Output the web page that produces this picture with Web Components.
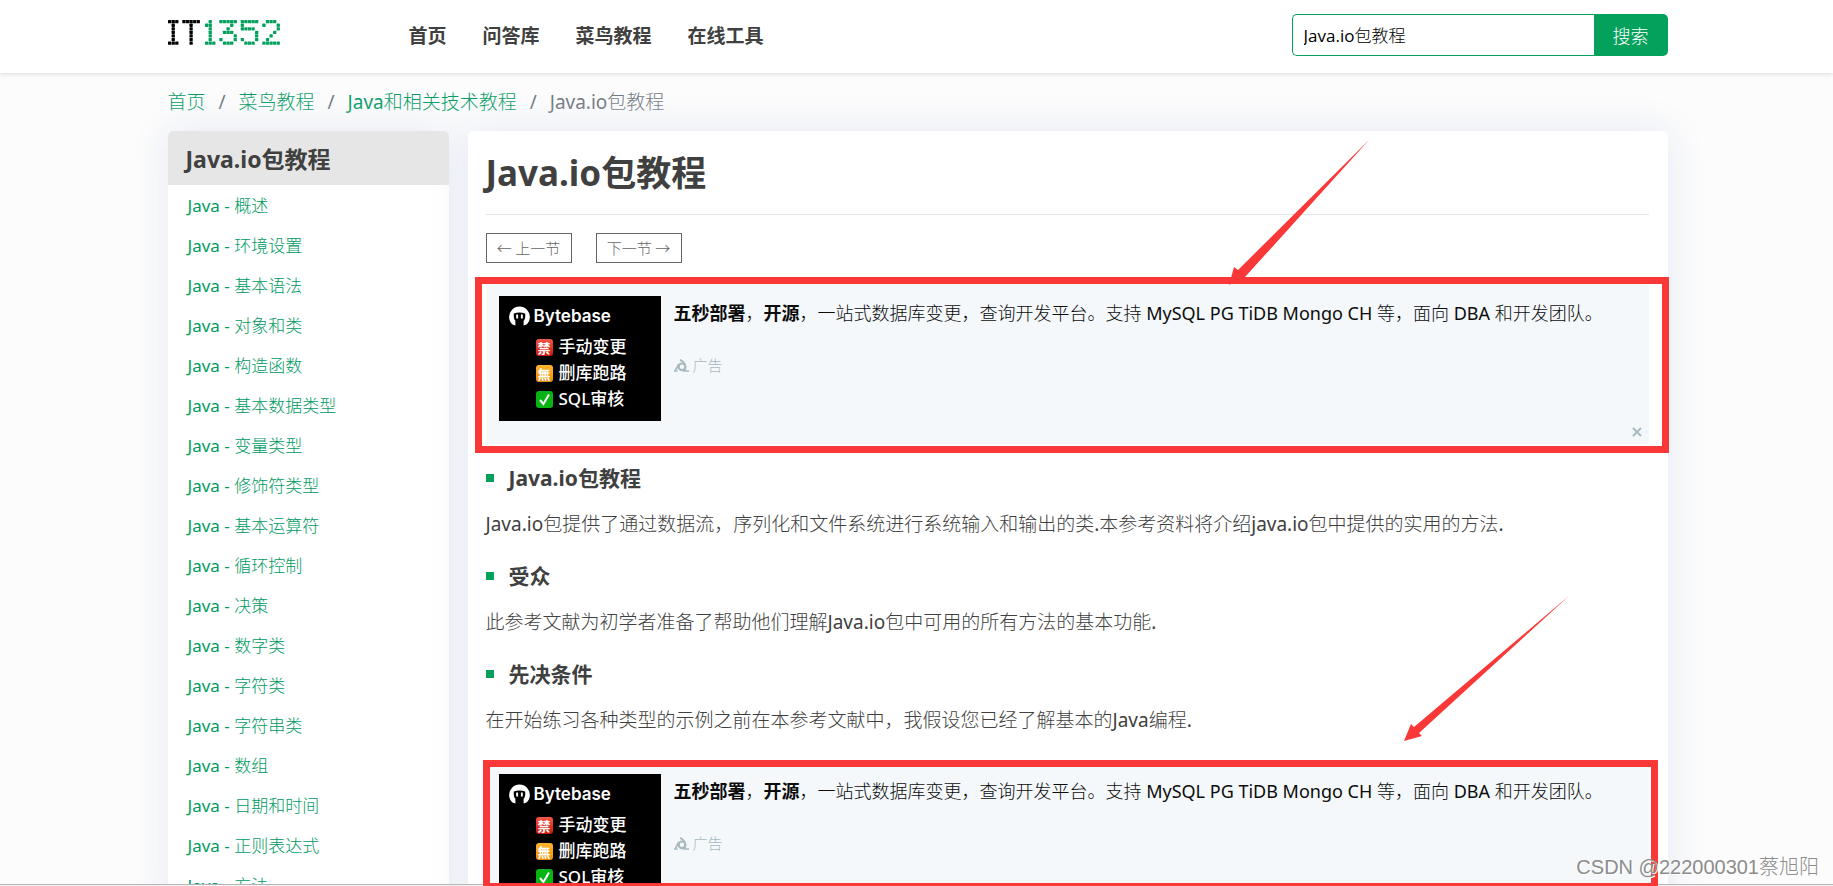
<!DOCTYPE html>
<html lang="zh-CN">
<head>
<meta charset="utf-8">
<title>Java.io包教程</title>
<style>
  html, body { margin: 0; padding: 0; }
  body {
    background: #fcfcfc;
    color: #404040;
    font-family: "Noto Sans", "Noto Sans CJK SC Light", "Noto Sans CJK SC", sans-serif;
    font-size: 19px;
    --green: #04a15d;
    --link: #009a61;
    --mark: #fa3838;
    --wrap: 1500px;
    --bold: "Noto Sans", "Noto Sans CJK SC", sans-serif;
  }
</style>
</head>
<body>
<tutorial-page></tutorial-page>
<script>
const define = (name, html, setup) => {
  const template = document.createElement('template');
  template.innerHTML = html;
  customElements.define(name, class extends HTMLElement {
    connectedCallback() {
      if (this.shadowRoot) return;
      const root = this.attachShadow({ mode: 'open' });
      root.append(template.content.cloneNode(true));
      if (setup) setup(root, this);
    }
  });
};

/* Dot-matrix logo, one 5x7 cell map for each character */
define('dot-logo', `
<style>
  :host { display: block; }
  svg { display: block; }
</style>
<svg width="114" height="28" viewBox="0 0 114 28" role="img" aria-label="IT1352"></svg>`, root => {
  const cells = [
    [0, '#000', ['###', '.#.', '.#.', '.#.', '.#.', '.#.', '###']],
    [14.3, '#000', ['#####', '..#..', '..#..', '..#..', '..#..', '..#..', '..#..']],
    [37, '#04a15d', ['.#.', '##.', '.#.', '.#.', '.#.', '.#.', '###']],
    [51.3, '#04a15d', ['#####', '...#.', '..#..', '.###.', '....#', '#...#', '.###.']],
    [72.7, '#04a15d', ['#####', '#....', '####.', '....#', '....#', '#...#', '.###.']],
    [94.3, '#04a15d', ['.###.', '#...#', '....#', '...#.', '..#..', '.#...', '#####']]
  ];
  const step = 3.58;
  let out = '';
  for (const [left, fill, rows] of cells)
    rows.forEach((row, y) => [...row].forEach((c, x) => {
      if (c === '#') out += `<rect x="${left + x * step}" y="${1 + y * step}" width="3.3" height="3.3" rx=".6" fill="${fill}"/>`;
    }));
  root.querySelector('svg').innerHTML = out;
});

define('search-box', `
<style>
  :host { display: block; width: 376px; }
  form { display: flex; height: 42px; margin: 0; }
  input {
    flex: 1; min-width: 0; box-sizing: border-box; padding: 0 11px 1px; margin: 0;
    border: 1px solid var(--green); border-right: 0; border-radius: 5px 0 0 5px;
    background: #fff; color: #000; outline: 0;
    font: 17px "Open Sans", "Noto Sans CJK SC Light", "Noto Sans CJK SC", sans-serif;
  }
  button {
    width: 74px; border: 0; padding: 0; border-radius: 0 5px 5px 0;
    background: var(--green); color: #fff;
    font: 18px "Noto Sans", "Noto Sans CJK SC Light", "Noto Sans CJK SC", sans-serif;
  }
</style>
<form onsubmit="return false">
  <input type="text" aria-labelledby="go" value="Java.io包教程">
  <button id="go" type="submit">搜索</button>
</form>`);

define('site-header', `
<style>
  :host { display: block; position: relative; background: #fff; box-shadow: 0 1px 5px rgba(0,0,0,.14); }
  .wrap { max-width: var(--wrap); height: 73px; margin: 0 auto; padding-left: 2px; display: flex; align-items: center; }
  dot-logo { margin-bottom: 8px; width: 241px; }
  nav { display: flex; gap: 36px; flex: 1; padding-bottom: 2px; font-family: var(--bold); }
  a { color: #404040; font-weight: 700; text-decoration: none; line-height: 40px; }
  search-box { margin-bottom: 3px; }
</style>
<div class="wrap">
  <dot-logo></dot-logo>
  <nav><a href="#">首页</a><a href="#">问答库</a><a href="#">菜鸟教程</a><a href="#">在线工具</a></nav>
  <search-box></search-box>
</div>`);

define('bread-crumb', `
<style>
  :host { display: block; color: #6c757d; }
  ol { display: flex; gap: 12px; list-style: none; margin: 0; padding: 0; line-height: 58px; height: 58px; }
  li { display: flex; gap: 12px; }
  li + li::before { content: "/"; width: 9px; text-align: center; }
  a { color: var(--link); text-decoration: none; }
</style>
<ol>
  <li><a href="#">首页</a></li>
  <li><a href="#">菜鸟教程</a></li>
  <li><a href="#">Java和相关技术教程</a></li>
  <li aria-current="page">Java.io包教程</li>
</ol>`);

define('side-menu', `
<style>
  :host { display: block; background: #fff; border-radius: 5px; overflow: hidden; }
  h2 { margin: 0; padding: 0 18px; background: #e6e6e6; font-family: var(--bold); font-size: 23px; font-weight: 700; line-height: 56px; height: 54px; }
  ul { list-style: none; margin: 0; padding: 1px 20px; }
  a { display: block; line-height: 40px; height: 40px; font-size: 17px; color: var(--link); text-decoration: none; white-space: nowrap; }
</style>
<h2>Java.io包教程</h2>
<ul></ul>`, root => {
  const names = ['概述', '环境设置', '基本语法', '对象和类', '构造函数', '基本数据类型', '变量类型', '修饰符类型', '基本运算符', '循环控制', '决策', '数字类', '字符类', '字符串类', '数组', '日期和时间', '正则表达式', '方法'];
  root.querySelector('ul').innerHTML = names.map(n => `<li><a href="#">Java - ${n}</a></li>`).join('');
});

define('byte-banner', `
<style>
  :host { display: block; box-sizing: border-box; width: 162px; height: 125px; padding: 9px 0 0 10px; background: #000; color: #fff; }
  .brand { display: flex; align-items: center; gap: 4px; height: 22px; margin-bottom: 7px; font: 600 17px/22px Inter, sans-serif; }
  .row { display: flex; align-items: center; gap: 6px; height: 26px; padding-left: 27px; font: 500 17px/26px "Noto Sans", "Noto Sans CJK SC", sans-serif; white-space: nowrap; }
  i { width: 17px; height: 17px; border-radius: 3px; font: 700 13px/17px "Noto Sans CJK SC", sans-serif; text-align: center; }
  .stop { background: linear-gradient(#f4574a, #c9150c); }
  .none { background: linear-gradient(#ffb52e, #f08a00); }
  .done { background: #08b414; }
  .done svg { display: block; }
</style>
<div class="brand">
  <svg width="21" height="21" viewBox="0 0 21 21"><path fill="#fff" d="M3.5 18.6A10.4 10.4 0 1 1 17.5 18.6L14.6 19.6V14.8Q16.6 13.4 16.2 7.4Q10.5 5.6 4.8 7.4Q4.4 13.4 6.4 14.8V19.6Z"/><path fill="#fff" d="M7.2 8.4h1.9v4.2H7.2zM11.9 8.4h1.9v4.2h-1.9z"/></svg>
  <span>Bytebase</span>
</div>
<div class="row"><i class="stop">禁</i><span>手动变更</span></div>
<div class="row"><i class="none">無</i><span>删库跑路</span></div>
<div class="row"><i class="done"><svg width="17" height="17"><path d="M4 9l3.4 4L13 3.6" fill="none" stroke="#fff" stroke-width="2"/></svg></i><span>SQL审核</span></div>`);

define('ad-card', `
<style>
  :host { display: block; position: relative; }
  .ad { display: flex; gap: 13px; box-sizing: border-box; height: 160px; padding: 12px 13px; background: #f4f8fa; border-radius: 4px; }
  p { margin: 0; font-size: 18px; line-height: 34px; color: #0c0c0c; }
  p a { color: inherit; text-decoration: none; }
  b { font-weight: 700; font-family: var(--bold); }
  .tag { display: inline-flex; align-items: center; gap: 4px; margin-top: 23px; color: #a8bac0; font-size: 15px; line-height: 24px; text-decoration: none; }
  button { position: absolute; right: 5px; bottom: 4px; width: 14px; height: 16px; padding: 0; border: 0; background: none; }
  svg { display: block; }
  .mark { position: absolute; border: 7px solid var(--mark); pointer-events: none; z-index: 1; }
  :host([frame="wide"]) .mark { inset: -7px -20px -9px -11px; }
  :host([frame="tight"]) .mark { inset: -2px -9px 32px -3px; }
</style>
<div class="ad">
  <byte-banner></byte-banner>
  <div>
    <p><a href="#"><b>五秒部署</b>，<b>开源</b>，一站式数据库变更，查询开发平台。支持 MySQL PG TiDB Mongo CH 等，面向 DBA 和开发团队。</a></p>
    <a class="tag" href="#"><svg width="15" height="13" viewBox="0 0 15 13"><g fill="none" stroke="#a8bac0"><circle cx="8" cy="7.8" r="3.3" stroke-width="2.2"/><path d="M6 .8Q10.4 2.6 11.2 7V12M4.8 5L1.4 11.6" stroke-width="1.8"/><path d="M9 12h6M0 12h3.6" stroke-width="1.6"/></g></svg>广告</a>
  </div>
  <button type="button" aria-label="关闭"><svg width="14" height="16"><path d="M3 4l8 8M11 4l-8 8" stroke="#a8bac0" stroke-width="2"/></svg></button>
</div>
<div class="mark"></div>`);

define('topic-section', `
<style>
  :host { display: block; }
  h3 { display: flex; align-items: center; gap: 15px; margin: 0 0 14px; font-family: var(--bold); font-size: 21px; line-height: 34px; height: 34px; font-weight: 700; }
  h3::before { content: ""; width: 8px; height: 8px; background: var(--green); }
  p { margin: 0; line-height: 30px; font-size: 19px; }
</style>
<h3><slot name="title"></slot></h3>
<p><slot></slot></p>`);

define('page-arrows', `
<style>
  :host { display: block; position: absolute; top: 0; left: 0; width: 1200px; height: 640px; pointer-events: none; z-index: 2; }
  svg { display: block; }
</style>
<svg width="1200" height="640" fill="#fa3838">
  <path d="M901 9L777 146L777 148L774 146L761 154L766 136L770 139Z"/>
  <path d="M1102 464L951 602L954 605L936 610L943 593L946 596Z"/>
</svg>`);

define('article-card', `
<style>
  :host { display: block; position: relative; background: #fff; border-radius: 5px; padding: 0 19px 40px 18px; }
  h1 { margin: 0; padding: 20px 0 19px; border-bottom: 1px solid #e4e4e4; font-family: var(--bold); font-size: 35px; line-height: 44px; font-weight: 700; }
  .pager { display: flex; gap: 24px; margin: 18px 0 21px; }
  button { box-sizing: border-box; width: 86px; height: 30px; padding: 0 0 2px; background: #fff; border: 1px solid #666; color: #666; font: 15px "Noto Sans CJK SC Light", "Noto Sans CJK SC", sans-serif; white-space: nowrap; }
  .body { display: grid; gap: 20px; margin: 17px 0 27px; }
</style>
<h1>Java.io包教程</h1>
<div class="pager"><button type="button">← 上一节</button><button type="button">下一节 →</button></div>
<ad-card frame="wide"></ad-card>
<div class="body">
  <topic-section><span slot="title">Java.io包教程</span>Java.io包提供了通过数据流，序列化和文件系统进行系统输入和输出的类.本参考资料将介绍java.io包中提供的实用的方法.</topic-section>
  <topic-section><span slot="title">受众</span>此参考文献为初学者准备了帮助他们理解Java.io包中可用的所有方法的基本功能.</topic-section>
  <topic-section><span slot="title">先决条件</span>在开始练习各种类型的示例之前在本参考文献中，我假设您已经了解基本的Java编程.</topic-section>
</div>
<ad-card frame="tight"></ad-card>
<page-arrows></page-arrows>`);

define('tutorial-page', `
<style>
  :host { display: block; position: relative; height: 100vh; overflow: hidden; }
  .wrap { max-width: var(--wrap); margin: 0 auto; padding-left: 2px; }
  .cols { display: grid; grid-template-columns: 281px minmax(0, 1fr); gap: 19px; align-items: start; }
  side-menu, article-card { box-shadow: 0 0 40px #e4e8f4; }
  .edge { position: absolute; left: 0; right: 0; bottom: 0; height: 1px; border-top: 1px solid #b4b4b4; background: #f6f6f6; }
  .sign { position: absolute; right: 14px; bottom: 4px; z-index: 3; font: 20px/30px "Liberation Sans", "Noto Sans CJK SC Light", "Noto Sans CJK SC", sans-serif; color: #8c8c8c; text-shadow: 1px 1px 0 #fff; }
</style>
<site-header></site-header>
<div class="wrap">
  <bread-crumb></bread-crumb>
  <div class="cols"><side-menu></side-menu><article-card></article-card></div>
</div>
<div class="edge"></div>
<div class="sign">CSDN @222000301蔡旭阳</div>`);
</script>
</body>
</html>
